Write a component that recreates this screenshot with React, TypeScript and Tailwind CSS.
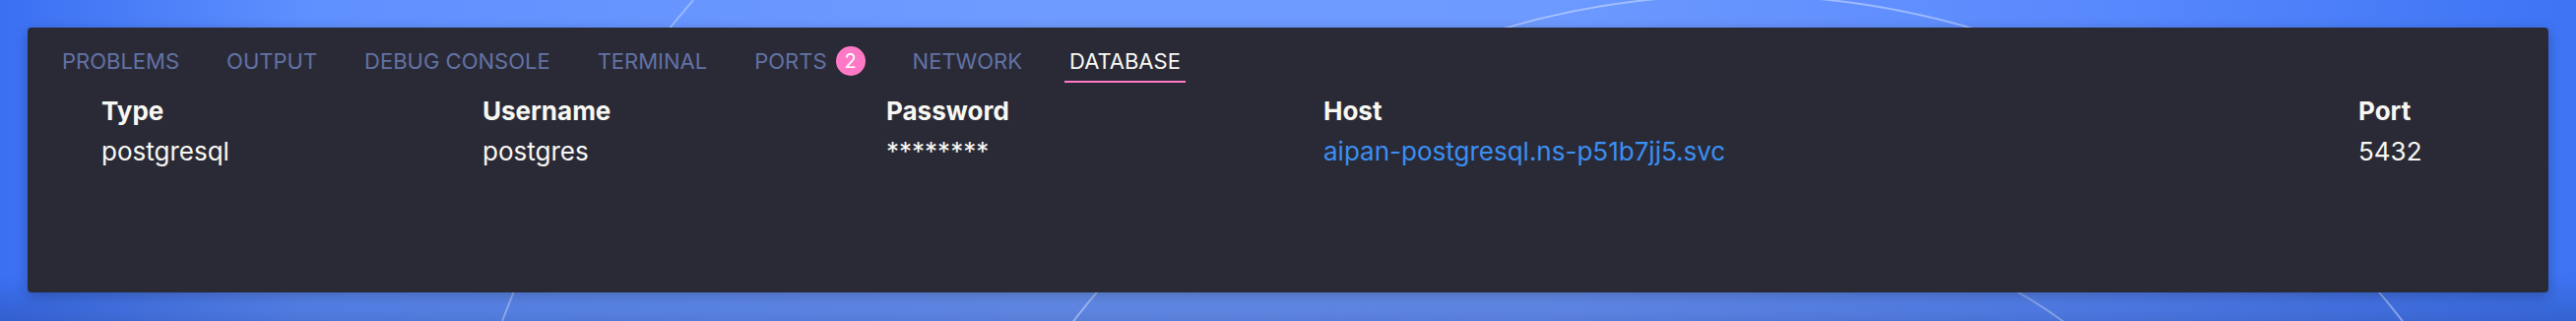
import React from "react";

const tabs = ["PROBLEMS", "OUTPUT", "DEBUG CONSOLE", "TERMINAL", "PORTS", "NETWORK", "DATABASE"];

export default function App() {
  return (
    <div className="relative w-[2616px] h-[326px] overflow-hidden bg-[linear-gradient(to_bottom,rgba(0,0,0,0)_0%,rgba(0,0,0,0)_86%,rgba(30,50,110,0.28)_100%),linear-gradient(to_right,#3a70f2_0%,#5f90ff_12%,#6e9bff_40%,#6d9aff_60%,#5888fd_82%,#3d74f4_100%)] font-['Inter','Noto_Sans',sans-serif]">
      <svg className="absolute inset-0" width="2616" height="326" viewBox="0 0 2616 326" fill="none">
        <circle cx="1765" cy="848" r="853" stroke="rgba(255,255,255,0.38)" strokeWidth="2" />
        <path d="M704 0 A1067 1067 0 0 0 510 326" stroke="rgba(255,255,255,0.32)" strokeWidth="2" />
        <path d="M2020 282 Q2060 300 2100 330" stroke="rgba(255,255,255,0.3)" strokeWidth="2" />
      </svg>
      <div className="relative p-[28px]">
        <div className="h-[269px] w-[2560px] rounded-[4px] bg-[#2a2a37] shadow-[0_4px_14px_rgba(0,0,0,0.25)] pt-[19px]">
          <div className="flex items-start gap-[38px] pl-[30px]">
            {tabs.map((t) => {
              const active = t === "DATABASE";
              return (
                <div
                  key={t}
                  className={
                    active
                      ? "flex items-center px-[5px] pb-[5px] border-b-2 border-[#ff79c6]"
                      : "flex items-center px-[5px] pb-[5px] border-b-2 border-transparent"
                  }
                >
                  <span
                    className={
                      active
                        ? "text-[22px] leading-[30px] text-[#f8f8f2]"
                        : "text-[22px] leading-[30px] text-[#6272a4]"
                    }
                  >
                    {t}
                  </span>
                  {t === "PORTS" && (
                    <span className="ml-[9px] flex h-[30px] w-[30px] items-center justify-center rounded-full bg-[#ff79c6] text-[20px] leading-none text-white">
                      2
                    </span>
                  )}
                </div>
              );
            })}
          </div>
          <div className="mt-[8px] pl-[75px] grid grid-cols-[387px_410px_444px_1051px_1fr] text-[26px] leading-[41px] text-[#f8f8f2]">
            <div className="font-bold">Type</div>
            <div className="font-bold">Username</div>
            <div className="font-bold">Password</div>
            <div className="font-bold">Host</div>
            <div className="font-bold">Port</div>
            <div>postgresql</div>
            <div>postgres</div>
            <div>********</div>
            <div className="text-[#3b8ff3]">aipan-postgresql.ns-p51b7jj5.svc</div>
            <div>5432</div>
          </div>
        </div>
      </div>
    </div>
  );
}
